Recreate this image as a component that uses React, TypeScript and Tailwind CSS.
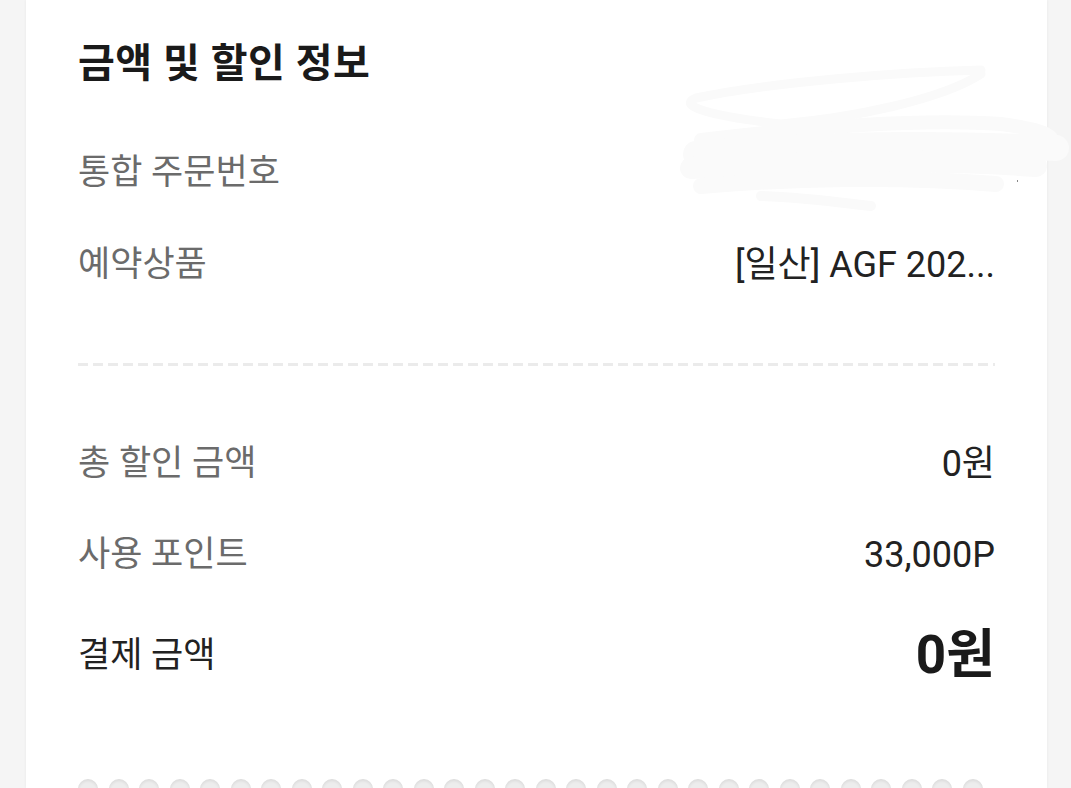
const rows1 = [
  { label: '통합 주문번호', value: '' },
  { label: '예약상품', value: '[일산] AGF 202...' },
]

const rows2 = [
  { label: '총 할인 금액', value: '0원' },
  { label: '사용 포인트', value: '33,000P' },
]

function Row({ label, value }: { label: string; value: string }) {
  return (
    <div className="flex h-[92px] items-center justify-between">
      <span className="text-[35px] text-[#6b6b6b]">{label}</span>
      <span className="text-[36px] text-[#222222]">{value}</span>
    </div>
  )
}

function Scribble() {
  return (
    <svg className="pointer-events-none absolute left-[625px] top-[58px]" width="431" height="160" viewBox="0 0 431 160">
      <g fill="none" stroke="#fafafa" strokeLinecap="round" strokeLinejoin="round">
        <path d="M330 12 C250 14 120 24 45 40 C25 48 60 58 130 66 C200 60 290 42 330 16" strokeWidth="9" />
        <path d="M50 82 C150 70 260 60 350 66 C380 70 395 74 400 80" strokeWidth="14" />
        <path d="M45 96 C140 88 260 84 405 90" strokeWidth="26" />
        <path d="M40 110 C150 104 280 100 385 108" strokeWidth="22" />
        <path d="M50 128 C140 120 250 118 345 126" strokeWidth="16" />
        <path d="M110 138 C160 140 200 146 220 148" strokeWidth="10" />
      </g>
      <rect x="366" y="122" width="1" height="2" fill="#888" />
    </svg>
  )
}

export default function App() {
  return (
    <div className="h-[788px] overflow-hidden bg-[#f5f5f5]" style={{ fontFamily: "Roboto, 'Noto Sans CJK KR', sans-serif" }}>
      <div className="relative ml-[26px] h-[788px] w-[1021px] bg-white px-[52px] pt-[36px] shadow-[0_0_3px_rgba(0,0,0,0.06)]">
        <h1 className="text-[40px] leading-[56px] font-bold tracking-[0.5px] text-[#1a1a1a]">금액 및 할인 정보</h1>
        <div className="mt-[35px]">
          {rows1.map((r) => (
            <Row key={r.label} label={r.label} value={r.value} />
          ))}
        </div>
        <div className="mt-[52px] h-[3px] bg-[repeating-linear-gradient(to_right,#ebebeb_0,#ebebeb_10px,transparent_10px,transparent_15px)]" />
        <div className="mt-[52px]">
          {rows2.map((r) => (
            <div key={r.label} className="h-[91px]">
              <Row label={r.label} value={r.value} />
            </div>
          ))}
        </div>
        <div className="mt-[10px] flex h-[92px] items-center justify-between">
          <span className="text-[35px] text-[#222222]">결제 금액</span>
          <span className="text-[53px] font-bold text-[#1a1a1a]">0원</span>
        </div>
        <div className="mt-[77px] flex gap-[10.5px]">
          {Array.from({ length: 30 }).map((_, i) => (
            <div key={i} className="h-[20px] w-[20px] shrink-0 rounded-full bg-[#ededed] shadow-[inset_0_2px_3px_rgba(0,0,0,0.07)]" />
          ))}
        </div>
        <Scribble />
      </div>
    </div>
  )
}
